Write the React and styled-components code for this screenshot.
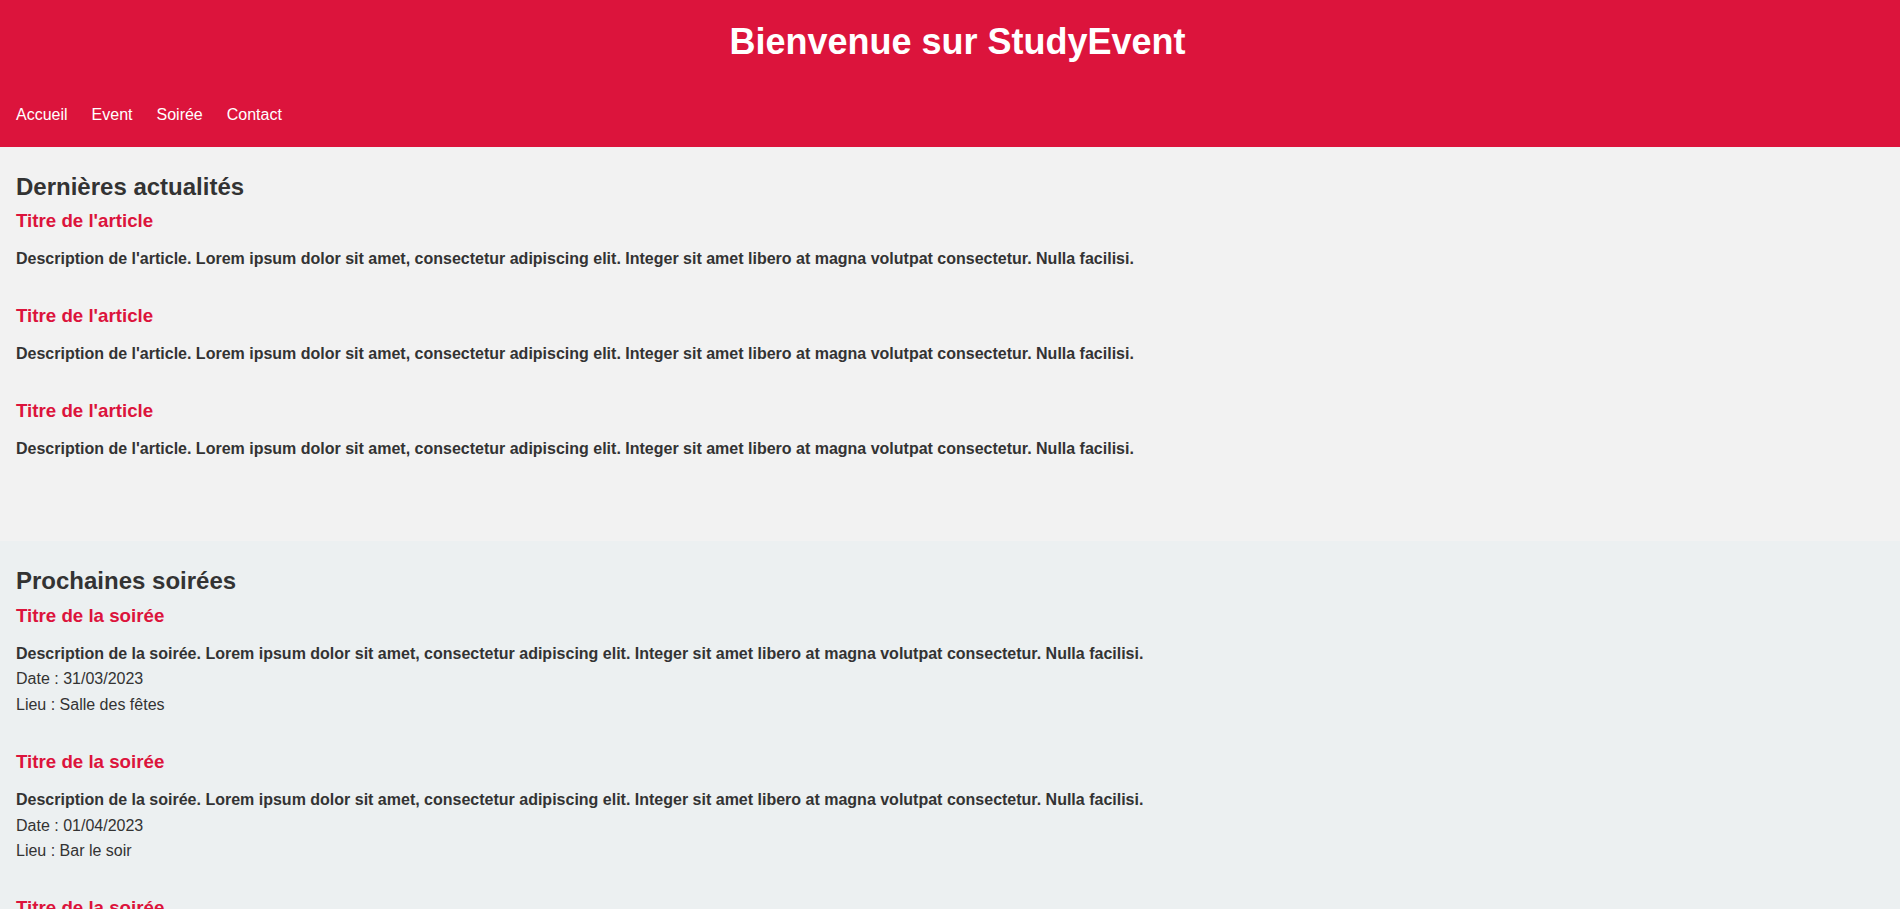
import React from "react";
import styled, { createGlobalStyle } from "styled-components";

const GlobalStyle = createGlobalStyle`
  html, body {
    margin: 0;
    padding: 0;
  }
  body {
    font-family: "Liberation Sans", Arial, sans-serif;
    font-size: 16px;
    line-height: 1.6;
    color: #333;
    background: #ffffff;
  }
  * { box-sizing: border-box; }
`;

const Header = styled.header`
  background: #dc143c;
  color: #ffffff;
  padding: 21px 16px 19px;
`;

const SiteTitle = styled.h1`
  margin: 0 0 39px;
  padding-left: 15px;
  font-size: 36px;
  line-height: 42px;
  font-weight: 700;
  text-align: center;
`;

const NavList = styled.ul`
  list-style: none;
  margin: 0;
  padding: 0;
  display: flex;
  gap: 24px;
`;

const NavLink = styled.a`
  color: #ffffff;
  text-decoration: none;
  font-size: 16px;
  line-height: 25.6px;
`;

const Section = styled.section`
  background: ${(p) => p.$bg};
  padding: 26px 16px 46px;
`;

const SectionTitle = styled.h2`
  margin: 0 0 9.5px;
  font-size: 24px;
  line-height: 28px;
  font-weight: 700;
  color: #333;
`;

const Item = styled.article`
  margin-bottom: 33.5px;
`;

const ItemTitle = styled.h3`
  margin: 0 0 14px;
  font-size: 18.72px;
  line-height: 22px;
  font-weight: 700;
  color: #dc143c;
`;

const Description = styled.p`
  margin: 0;
  font-weight: 700;
  line-height: 25.6px;
`;

const Meta = styled.p`
  margin: 0;
  font-weight: 400;
  line-height: 25.6px;
`;

const articles = [1, 2, 3];
const parties = [
  { date: "31/03/2023", lieu: "Salle des fêtes" },
  { date: "01/04/2023", lieu: "Bar le soir" },
  { date: "07/04/2023", lieu: "Club étudiant" },
];

export default function App() {
  return (
    <>
      <GlobalStyle />
      <Header>
        <SiteTitle>Bienvenue sur StudyEvent</SiteTitle>
        <nav>
          <NavList>
            <li><NavLink href="#">Accueil</NavLink></li>
            <li><NavLink href="#">Event</NavLink></li>
            <li><NavLink href="#">Soirée</NavLink></li>
            <li><NavLink href="#">Contact</NavLink></li>
          </NavList>
        </nav>
      </Header>
      <main>
        <Section $bg="#f2f2f2">
          <SectionTitle>Dernières actualités</SectionTitle>
          {articles.map((a) => (
            <Item key={a}>
              <ItemTitle>Titre de l'article</ItemTitle>
              <Description>
                Description de l'article. Lorem ipsum dolor sit amet, consectetur adipiscing elit. Integer sit amet libero at magna volutpat consectetur. Nulla facilisi.
              </Description>
            </Item>
          ))}
        </Section>
        <Section $bg="#ecf0f1">
          <SectionTitle>Prochaines soirées</SectionTitle>
          {parties.map((p, i) => (
            <Item key={i}>
              <ItemTitle>Titre de la soirée</ItemTitle>
              <Description>
                Description de la soirée. Lorem ipsum dolor sit amet, consectetur adipiscing elit. Integer sit amet libero at magna volutpat consectetur. Nulla facilisi.
              </Description>
              <Meta>Date : {p.date}</Meta>
              <Meta>Lieu : {p.lieu}</Meta>
            </Item>
          ))}
        </Section>
      </main>
    </>
  );
}
